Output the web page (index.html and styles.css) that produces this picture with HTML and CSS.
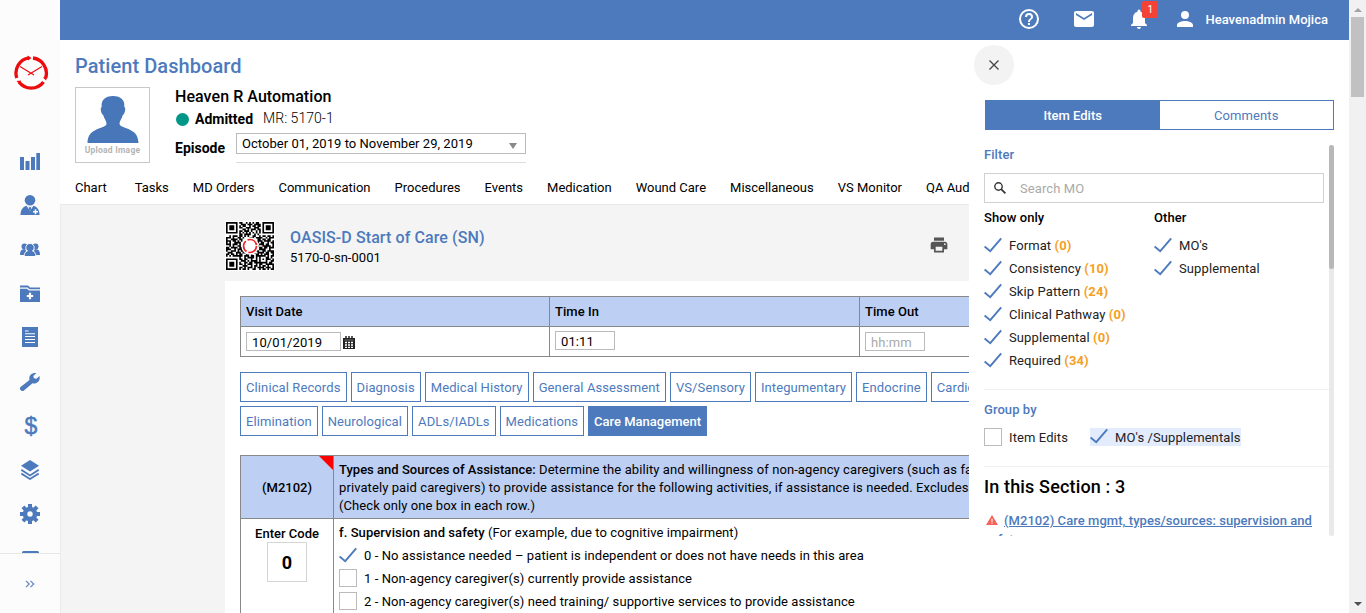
FILE: index.html
```html
<!DOCTYPE html>
<html lang="en">
<head>
<meta charset="utf-8">
<title>Patient Dashboard</title>
<link rel="stylesheet" href="styles.css">
</head>
<body>
<svg class="defs" width="0" height="0">
  <symbol id="check" viewBox="0 0 18 18"><path d="M.6 9.600 6.200 14.200 17.200 1.400" fill="none" stroke="#4d7abd" stroke-width="1.900"/></symbol>
</svg>
<div class="app">
  <aside class="sidebar">
    <div class="brand">
      <svg width="36" height="36" viewBox="0 0 36 36" fill="none" stroke="#ec0c10">
        <path d="M20 3A15.300 15.300 0 0 1 32.600 23M30.500 27A15.300 15.300 0 0 1 6 27M3.800 23A15.300 15.300 0 0 1 16 2.900" stroke-width="3.300"/>
        <path d="M7 11.500 21 20M29 11.500 15 20" stroke-width="1.200"/>
        <path d="m14.500 .5 4 2.500-3.500 2.500zM34.500 21.500l-1.500 4-3-3zM3.500 26l4.500-.5-1 4z" fill="#ec0c10" stroke="none"/>
      </svg>
    </div>
    <nav class="side-nav">
      <a><svg width="20" height="18" viewBox="0 0 20 18"><path d="M0 5h4v13H0zM5.500 9h4v9h-4zM11 5h4v13h-4zM16.300 1H20v17h-3.700z"/></svg></a>
      <a><svg width="20" height="20" viewBox="0 0 20 20"><circle cx="10" cy="5.300" r="5.300"/><path d="M.5 20c0-5 2-8 6-9.300l3.500 5 3.500-5c4 1.300 6 4.300 6 9.300z"/><path d="m8.700 11.500 1.300 1 1.300-1-.5 3.500H9.200z"/><path d="M15.500 14.200v5M13 16.700h5" stroke="#fcfcfc" stroke-width="1.500"/></svg></a>
      <a><svg width="20" height="13" viewBox="0 0 20 13"><circle cx="4.500" cy="3.500" r="3"/><circle cx="15.500" cy="3.500" r="3"/><path d="M0 11.500C0 8 1.500 6.300 4 6.300c1 0 1.500.3 2 .8L5 12H0zM20 11.500c0-3.500-1.500-5.200-4-5.200-1 0-1.500.3-2 .8l1 4.900h5z"/><path d="M4.200 13.500c0-3.200 1.300-5 3.300-5.500a4.200 4.200 0 1 1 5 0c2 .5 3.300 2.300 3.300 5.500z" stroke="#fcfcfc" stroke-width=".9"/></svg></a>
      <a><svg width="20" height="17" viewBox="0 0 20 17"><path d="M0 .5h8l2 2h10v1.700H9.500l-2-1.700H0zM0 3.700h7l2 1.700h11V17H0z"/><path d="M10 7.800v6.400M6.800 11h6.400" stroke="#fcfcfc" stroke-width="2.200"/></svg></a>
      <a><svg width="16" height="20" viewBox="0 0 16 20"><path d="M0 0h16v20H0z"/><path d="M3 4h3.500M3 6.700h10M3 9.500h10M3 12.500h10M3 15.500h10" stroke="#fcfcfc" stroke-width="1.100"/></svg></a>
      <a><svg width="20" height="19" viewBox="0 0 20 19"><path d="M.5 15 9.500 8C8.500 4 11 .3 16.500 1L13.300 4l.7 2.300 2.500.5L19.500 4c1.200 4.500-2.500 8.500-7 7.300L4.500 18a2.500 2.500 0 0 1-4-3z"/></svg></a>
      <a class="dollar">$</a>
      <a><svg width="18" height="20" viewBox="0 0 18 20"><path d="m9 0 9 5.800-9 5.800-9-5.800z"/><path d="m.3 9.800 8.700 5.600 8.700-5.600M.3 13.600 9 19l8.700-5.400" fill="none" stroke="#4d7abd" stroke-width="1.800"/></svg></a>
      <a><svg width="20" height="20" viewBox="0 0 20 20"><circle cx="10" cy="10" r="5" fill="none" stroke="#4d7abd" stroke-width="4.600"/><path d="M10 0v4M10 16v4M0 10h4M16 10h4M2.900 2.900l3 3M14.100 14.100l3 3M2.900 17.100l3-3M14.100 5.900l3-3" stroke="#4d7abd" stroke-width="4"/></svg></a>
      <a><svg width="17" height="16" viewBox="0 0 17 16"><rect width="17" height="16" rx="1.500"/></svg></a>
    </nav>
    <div class="expand"><svg width="10" height="8" viewBox="0 0 10 8"><path d="m1 .8 3.200 3.200L1 7.200M5.500 .8 8.700 4 5.500 7.200" fill="none" stroke="#6486c4" stroke-width="1.200"/></svg></div>
  </aside>

  <div class="main">
    <header class="topbar">
      <svg class="i-help" width="24" height="24" viewBox="0 0 24 24"><path d="M11 18h2v-2h-2v2zm1-16a10 10 0 1 0 0 20 10 10 0 0 0 0-20zm0 18a8 8 0 1 1 0-16 8 8 0 0 1 0 16zm0-14a4 4 0 0 0-4 4h2a2 2 0 1 1 4 0c0 2-3 1.750-3 5h2c0-2.250 3-2.500 3-5a4 4 0 0 0-4-4z"/></svg>
      <svg class="i-mail" width="24" height="24" viewBox="0 0 24 24"><path d="M20 4H4a2 2 0 0 0-2 2v12c0 1.100.9 2 2 2h16a2 2 0 0 0 2-2V6a2 2 0 0 0-2-2zm0 4-8 5-8-5V6l8 5 8-5v2z"/></svg>
      <div class="bell">
        <svg width="24" height="24" viewBox="0 0 24 24"><path d="M12 22a2 2 0 0 0 2-2h-4c0 1.100.9 2 2 2zm6-6v-5c0-3.100-1.600-5.600-4.500-6.300V4a1.500 1.500 0 0 0-3 0v.7C7.600 5.400 6 7.900 6 11v5l-2 2v1h16v-1l-2-2z"/></svg>
        <span class="badge">1</span>
      </div>
      <svg class="i-user" width="24" height="24" viewBox="0 0 24 24"><path d="M12 12a4 4 0 1 0 0-8 4 4 0 0 0 0 8zm0 2c-2.700 0-8 1.300-8 4v2h16v-2c0-2.700-5.300-4-8-4z"/></svg>
      <span class="user-name">Heavenadmin Mojica</span>
    </header>

    <div class="body">
      <section class="content">
        <div class="patient">
          <h1>Patient Dashboard</h1>
          <div class="patient-row">
            <div class="photo">
              <svg width="52" height="48" viewBox="0 0 52 48"><path d="M26 1c8 0 12 4 11.300 11 2 .8.500 7-1.500 8-1 4-3.300 6-3.300 8.500 0 6 19 3 19 19.500H.5C.5 31.500 19.500 34.500 19.500 28.500c0-2.500-2.300-4.500-3.300-8.500-2-1-3.500-7.200-1.500-8C14 5 18 1 26 1z" fill="#4776b9"/></svg>
              <span>Upload Image</span>
            </div>
            <div class="details">
              <div class="p-name">Heaven R Automation</div>
              <div class="p-status"><i class="dot"></i><b>Admitted</b><span>MR: 5170-1</span></div>
              <div class="p-episode"><b>Episode</b><div class="select-wrap"><div class="select">October 01, 2019 to November 29, 2019<i></i></div></div></div>
            </div>
          </div>
        </div>
        <nav class="tabs">
          <a>Chart</a><a>Tasks</a><a>MD Orders</a><a>Communication</a><a>Procedures</a><a>Events</a><a>Medication</a><a>Wound Care</a><a>Miscellaneous</a><a>VS Monitor</a><a>QA Audit</a>
        </nav>
        <div class="doc">
          <div class="doc-head">
            <svg class="qr" width="50" height="50" viewBox="-.6 -.6 30.200 30.200"><rect x="-.6" y="-.6" width="30.200" height="30.200" fill="#fff"/><path id="qr-modules"/><circle cx="14.500" cy="14.500" r="5.300" fill="#fff"/><circle cx="14.500" cy="14.500" r="3.900" fill="none" stroke="#ee2024" stroke-width="1" stroke-dasharray="7 1.170"/></svg>
            <div class="doc-title">
              <h2>OASIS-D Start of Care (SN)</h2>
              <div>5170-0-sn-0001</div>
            </div>
            <svg class="print" width="20" height="20" viewBox="0 0 24 24"><path d="M19 8H5a3 3 0 0 0-3 3v6h4v4h12v-4h4v-6a3 3 0 0 0-3-3zm-3 11H8v-5h8v5zm3-7a1 1 0 1 1 0-2 1 1 0 0 1 0 2zM18 3H6v4h12V3z"/></svg>
          </div>
          <div class="sheet">
            <div class="visit">
              <div class="th">Visit Date</div><div class="th">Time In</div><div class="th">Time Out</div>
              <div class="td"><span class="field date">10/01/2019</span><svg width="12" height="13" viewBox="0 0 12 13"><path d="M0 2h12v11H0z" fill="#222"/><path d="M3 0v3M6 0v3M9 0v3" stroke="#222" stroke-width="1.500"/><path d="M1.500 4h9" stroke="#aaa" stroke-width=".6"/><path d="M2 6.500h8M2 9h8M2 11.300h8" stroke="#fff" stroke-width="1.300" stroke-dasharray="2 1"/></svg></div>
              <div class="td in"><span class="field">01:11</span></div>
              <div class="td"><span class="field empty">hh:mm</span></div>
            </div>
            <div class="sections">
              <div><a>Clinical Records</a><a>Diagnosis</a><a>Medical History</a><a>General Assessment</a><a>VS/Sensory</a><a>Integumentary</a><a>Endocrine</a><a>Cardiovascular</a></div>
              <div><a>Elimination</a><a>Neurological</a><a>ADLs/IADLs</a><a>Medications</a><a class="on">Care Management</a></div>
            </div>
            <div class="question">
              <div class="q-code">(M2102)</div>
              <div class="q-text"><b>Types and Sources of Assistance:</b> Determine the ability and willingness of non-agency caregivers (such as family<br>privately paid caregivers) to provide assistance for the following activities, if assistance is needed. Excludes all<br>(Check only one box in each row.)</div>
              <div class="q-enter"><b>Enter Code</b><span>0</span></div>
              <div class="q-options">
                <div class="q-sub"><b>f. Supervision and safety</b> (For example, due to cognitive impairment)</div>
                <div class="opt"><svg class="ck"><use href="#check"/></svg>0 - No assistance needed – patient is independent or does not have needs in this area</div>
                <div class="opt"><i class="box"></i>1 - Non-agency caregiver(s) currently provide assistance</div>
                <div class="opt"><i class="box"></i>2 - Non-agency caregiver(s) need training/ supportive services to provide assistance</div>
              </div>
            </div>
          </div>
        </div>
      </section>

      <aside class="panel">
        <button class="close"><svg width="10" height="10" viewBox="0 0 10 10"><path d="m.5.500 9 9M9.500.500l-9 9" stroke="#444" stroke-width="1.300"/></svg></button>
        <div class="switch"><a class="on">Item Edits</a><a>Comments</a></div>
        <div class="scroll">
          <div class="scroll-body">
            <div class="filter">
              <h3>Filter</h3>
              <div class="search"><svg width="12" height="12" viewBox="0 0 12 12" fill="none" stroke="#333"><circle cx="4.500" cy="4.500" r="3.700" stroke-width="1.400"/><path d="m7.200 7.200 4.200 4.200" stroke-width="1.700"/></svg><span>Search MO</span></div>
              <div class="cols">
                <div>
                  <h4>Show only</h4>
                  <div class="opt"><svg class="ck"><use href="#check"/></svg>Format&nbsp;<b>(0)</b></div>
                  <div class="opt"><svg class="ck"><use href="#check"/></svg>Consistency&nbsp;<b>(10)</b></div>
                  <div class="opt"><svg class="ck"><use href="#check"/></svg>Skip Pattern&nbsp;<b>(24)</b></div>
                  <div class="opt"><svg class="ck"><use href="#check"/></svg>Clinical Pathway&nbsp;<b>(0)</b></div>
                  <div class="opt"><svg class="ck"><use href="#check"/></svg>Supplemental&nbsp;<b>(0)</b></div>
                  <div class="opt"><svg class="ck"><use href="#check"/></svg>Required&nbsp;<b>(34)</b></div>
                </div>
                <div>
                  <h4>Other</h4>
                  <div class="opt"><svg class="ck"><use href="#check"/></svg>MO's</div>
                  <div class="opt"><svg class="ck"><use href="#check"/></svg>Supplemental</div>
                </div>
              </div>
            </div>
            <div class="group">
              <h3>Group by</h3>
              <div class="group-row">
                <div class="opt"><i class="box"></i><span>Item Edits</span></div>
                <div class="opt picked"><svg class="ck"><use href="#check"/></svg><span>MO's /Supplementals</span></div>
              </div>
            </div>
            <div class="issues">
              <h2>In this Section : 3</h2>
              <p><svg width="12" height="10" viewBox="0 0 12 10"><path d="M6 0l6 10H0z" fill="#f4625a"/><path d="M6 3.700v3M6 7.600v1.100" stroke="#fff" stroke-width="1.100"/></svg><a>(M2102) Care mgmt, types/sources: supervision and safety</a></p>
            </div>
          </div>
          <div class="track"><i></i></div>
        </div>
      </aside>
    </div>
  </div>

  <div class="page-scroll"><i class="up"></i><i class="thumb"></i><i class="down"></i></div>
</div>
<script src="qr.js"></script>
</body>
</html>
```

FILE: qr.js
```js
// Module rows of the document's QR code; "#" is a dark module.
var rows = [
  "#######.##..#.#.#.##..#######",
  "#.....#..###.###.####.#.....#",
  "#.###.#.#.##..#.##.##.#.###.#",
  "#.###.#.##..###..###..#.###.#",
  "#.###.#...##.#.###.##.#.###.#",
  "#.....#.##.###.#..#.#.#.....#",
  "#######.#.#.#.#.#.#.#.#######",
  "........##.####..#.#.........",
  "..#.###.##.#.#..##..#.##.##.#",
  "###.#..##.#...###.####..#.###",
  "#..####.##......#..##.##.##..",
  "###.##.#.#.......#.###.####.#",
  "#.#..####.........##.##..#.##",
  "###.###.#.........#.###.##..#",
  "..#.#..##.........##..#####.#",
  "##.####.##........#.##.##.###",
  "###..#.###.......##.####..#..",
  "#..###.#.##.....#.##..##.####",
  ".###..###.##..####.####.##.##",
  "##.##.#.##..##.#..##.#.###..#",
  "#.#.######.###.##.######.#.##",
  "........#..#.####.#.#...##.#.",
  "#######.##.##..#..#.#.#.###.#",
  "#.....#..###.#.####.#...#..##",
  "#.###.#.#..##.##.########.##.",
  "#.###.#.##.#.###..#.##..#####",
  "#.###.#...###..#.##.#.##.#..#",
  "#.....#.##.#.###.#.####.###.#",
  "#######.#.##.#..##..#.##.#.##"
];
document.getElementById("qr-modules").setAttribute("d", rows.map(function (row, y) {
  return row.split("").map(function (c, x) {
    return c === "#" ? "M" + x + " " + y + "h1v1h-1z" : "";
  }).join("");
}).join(""));
```

FILE: styles.css
```css
* { box-sizing: border-box; }
body { margin: 0; font: 13px/18px Roboto, "Liberation Sans", sans-serif; color: #000; background: #fff; overflow: hidden; }
h1, h2, h3, h4, p { margin: 0; font-weight: 500; }
b { font-weight: 500; }
.defs { position: absolute; }
svg { flex: none; display: block; }

.app { display: flex; height: 613px; }
.main { flex: 1; display: flex; flex-direction: column; min-width: 0; }
.body { flex: 1; display: flex; min-height: 0; }

.sidebar { width: 60px; display: flex; flex-direction: column; background: #fcfcfc; }
.brand { height: 139px; padding: 55px 0 0 13px; }
.side-nav { flex: 1; min-height: 0; overflow: hidden; }
.side-nav a { height: 44.100px; display: flex; align-items: center; justify-content: center; fill: #4d7abd; color: #4d7abd; }
.side-nav .dollar { font: 500 23px/44px "Liberation Sans", sans-serif; padding-left: 2px; -webkit-text-stroke: .5px #4d7abd; }
.side-nav a:last-child { padding-top: 3px; }
.expand { height: 60px; border-top: 1px solid #e6e6e6; display: flex; align-items: center; justify-content: center; }

.topbar { height: 40px; background: #4d7abd; fill: #fff; color: #fff; display: flex; align-items: center; justify-content: flex-end; padding: 0 21px 2px 0; }
.i-mail { margin-left: 31px; }
.bell { position: relative; margin-left: 31px; }
.badge { position: absolute; left: 15px; top: -6px; width: 16px; height: 17px; border-radius: 2px; background: #f44336; font-size: 10px; line-height: 17px; text-align: center; }
.i-user { margin: 0 8px 0 22px; }
.user-name { font-weight: 500; padding-top: 1px; letter-spacing: .02px; }

.content { width: 909px; overflow: hidden; white-space: nowrap; }
.patient { padding: 14px 15px 0; height: 131px; }
.patient h1 { font-size: 20px; line-height: 24px; color: #4d7abd; letter-spacing: .07px; }
.patient-row { display: flex; margin-top: 9px; }
.photo { width: 75px; height: 76px; border: 1px solid #c8c8c8; display: flex; flex-direction: column; align-items: center; padding-top: 7px; }
.photo span { font-weight: 700; font-size: 8.500px; line-height: 15px; color: #b5b5b5; letter-spacing: .25px; }
.details { margin-left: 25px; }
.p-name { font-size: 16px; line-height: 19px; font-weight: 500; margin-bottom: 1px; letter-spacing: .06px; }
.p-status { display: flex; align-items: center; margin-top: 3px; height: 19px; font-size: 14px; }
.p-status b, .p-episode b { font-size: 14px; font-weight: 700; }
.p-status span { font-weight: 300; margin: -1px 0 0 10px; font-size: 14px; letter-spacing: .05px; }
.dot { width: 13px; height: 13px; border-radius: 50%; background: #009688; margin: 1px 6px 0 1px; }
.p-episode { display: flex; margin-top: 5px; }
.p-episode b { width: 61px; line-height: 30px; }
.select-wrap { width: 290px; height: 30px; border-bottom: 1px solid #ddd; }
.select { height: 21px; border: 1px solid #bbb; display: flex; align-items: center; justify-content: space-between; padding: 0 8px 0 5px; letter-spacing: .04px; }
.select i { border: 4px solid transparent; border-top: 6px solid #888; border-bottom: 0; margin-top: 4px; }

.tabs { height: 34px; display: flex; gap: 24px; padding: 8px 0 0 15px; border-bottom: 1px solid #e8e8e8; }
.tabs a:first-child { margin-right: 4px; }

.doc { background: #f4f4f4; height: 408px; border-left: 1px solid #eaeaea; padding-left: 164px; }
.doc-head { display: flex; height: 76px; padding: 16px 20px 0 0; }
.doc-title { margin-left: 15px; flex: 1; letter-spacing: .03px; }
.doc-title h2 { font-size: 16px; line-height: 20px; margin-top: 7px; margin-bottom: 1px; color: #4d7abd; letter-spacing: .09px; }
.print { fill: #555; margin-top: 14px; }
.sheet { background: #fff; padding: 15px 0 0 15px; height: 332px; }

.visit { display: grid; grid-template-columns: 309px 310px 311px; grid-template-rows: 30px 30px; border: solid #888; border-width: 1px 0 0 1px; width: 931px; }
.th, .td { border: solid #888; border-width: 0 1px 1px 0; padding-left: 5px; }
.th { background: #bdcff3; font-weight: 500; line-height: 30px; letter-spacing: .05px; }
.td { display: flex; align-items: flex-start; padding-top: 5px; }
.td.in { padding-top: 4px; }
.td svg { margin: 4px 0 0 2px; }
.field { width: 60px; height: 19px; border: 1px solid #bbb; padding-left: 5px; line-height: 20px; letter-spacing: .1px; }
.field.date { width: 95px; }
.field.empty { color: #aaa; }

.sections { display: flex; flex-direction: column; gap: 4px; margin-top: 15px; }
.sections div { display: flex; gap: 4px; }
.sections a { height: 30px; line-height: 29px; border: 1px solid #4d7abd; padding: 0 5px; color: #4d7abd; letter-spacing: .105px; }
.sections .on { background: #4d7abd; color: #fff; font-weight: 500; letter-spacing: 0; }

.question { display: grid; grid-template-columns: 93px 837px; grid-template-rows: 63px auto; margin-top: 19px; border: solid #888; border-width: 1px 0 0 1px; width: 931px; }
.question > div { border: solid #888; border-width: 0 1px 1px 0; }
.q-code, .q-text { background: #bdcff3; }
.q-code { position: relative; font-weight: 500; text-align: center; line-height: 63px; }
.q-code::after { content: ""; position: absolute; right: 0; top: 0; border-left: 14px solid transparent; border-top: 14px solid #f00; }
.q-text { padding: 5px; letter-spacing: .09px; }
.q-text b { letter-spacing: .01px; }
.q-enter { display: flex; flex-direction: column; align-items: center; padding-top: 6px; height: 110px; }
.q-enter span { width: 40px; height: 40px; margin-top: -1px; border: 1px solid #d5d5d5; font: 700 18px/40px Roboto, sans-serif; text-align: center; }
.q-options { padding: 5px; }
.q-sub { height: 20px; letter-spacing: .075px; }

.opt { display: flex; align-items: center; height: 23px; letter-spacing: .1px; }
.q-options .opt { letter-spacing: .085px; }
.ck { width: 18px; height: 18px; margin-right: 7px; }
.box { width: 18px; height: 18px; border: 1px solid #bbb; margin-right: 7px; background: #fff; }
.q-options .box { margin-top: -1px; }

.panel { width: 380px; background: #fff; padding: 5px 15px 0 5px; }
.close { display: flex; align-items: center; justify-content: center; width: 40px; height: 40px; padding: 0; border: 0; border-radius: 50%; background: #f3f3f3; }
.switch { display: flex; margin: 15px 0 0 11px; height: 30px; border: 1px solid #4d7abd; }
.switch a { flex: 1; text-align: center; line-height: 29px; color: #4d7abd; letter-spacing: .1px; }
.switch .on { background: #4d7abd; color: #fff; font-weight: 500; letter-spacing: 0; }
.scroll { display: flex; margin: 15px 0 0 10px; height: 391px; overflow: hidden; }
.scroll-body { width: 345px; color: #222; }
.track { width: 5px; background: #e9e9e9; border-radius: 3px; }
.track i { display: block; height: 124px; border-radius: 3px; background: #b8b8b8; }
h3 { font-size: 13px; line-height: 18px; color: #4d7abd; letter-spacing: .07px; }
h4 { font-size: 13px; line-height: 18px; color: #000; letter-spacing: .07px; }
.filter { height: 245px; padding-top: 1px; border-bottom: 1px solid #f0f0f0; }
.search { width: 340px; height: 30px; margin-top: 9px; border: 1px solid #d0d0d0; display: flex; align-items: center; padding-left: 9px; color: #aaa; letter-spacing: .1px; }
.search svg { margin-top: -1px; }
.search span { margin: 1px 0 0 14px; }
.cols { display: flex; margin-top: 6px; }
.cols > div { width: 170px; }
.cols h4 { margin-bottom: 7px; }
.opt b { color: #f5a024; font-weight: 700; letter-spacing: .1px; }
.group { height: 77px; padding-top: 11px; border-bottom: 1px solid #f0f0f0; }
.group-row { display: flex; justify-content: flex-start; gap: 22px; margin-top: 9px; }
.group-row .opt { height: 18px; }
.group-row span { padding-top: 2px; }
.picked { background: #e2ecfd; }
.issues { padding-top: 8px; }
.issues h2 { font-size: 18px; line-height: 24px; color: #000; letter-spacing: .15px; }
.issues p { margin-top: 12px; line-height: 19px; color: #4d7abd; }
.issues p svg { display: inline-block; margin: 0 6px 0 2px; vertical-align: 0; }
.issues a { text-decoration: underline; letter-spacing: .05px; }

.page-scroll { width: 17px; background: #f1f1f1; display: flex; flex-direction: column; align-items: center; padding: 8px 0 4px; }
.page-scroll i { border: 4px solid transparent; }
.page-scroll .up { border-top: 0; border-bottom-color: #a3a3a3; }
.page-scroll .thumb { width: 13px; height: 80px; margin: 5px 0 auto; border: 0; background: #c1c1c1; }
.page-scroll .down { border-bottom: 0; border-top-color: #505050; margin-bottom: 3px; }
```
